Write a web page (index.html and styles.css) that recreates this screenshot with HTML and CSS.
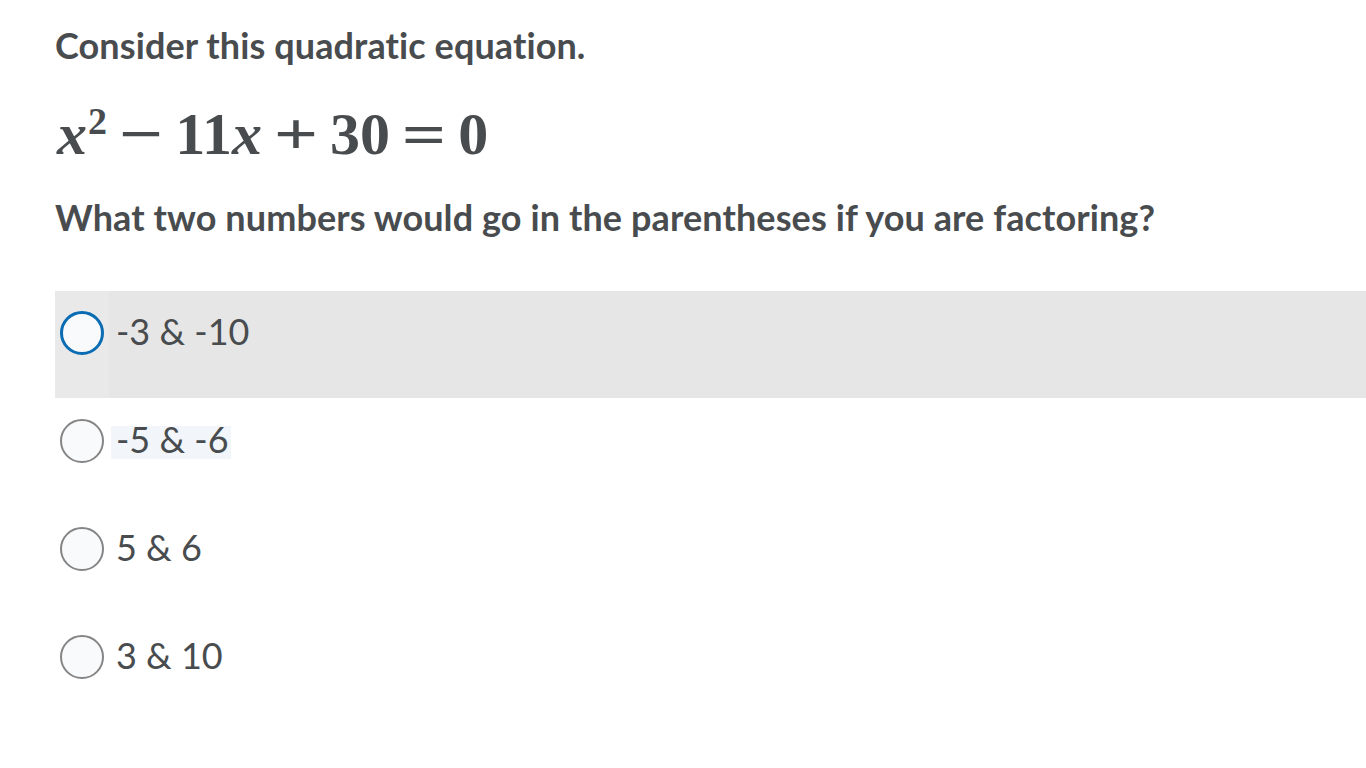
FILE: index.html
```html
<!DOCTYPE html>
<html>
<head>
<meta charset="utf-8">
<link rel="stylesheet" href="styles.css">
</head>
<body>
<main class="question">
  <p class="prompt">Consider this quadratic equation.</p>
  <div class="equation"><span class="var">x</span><span class="exp">2</span><span class="op">−</span><span class="num">11</span><span class="var">x</span><span class="op">+</span><span class="num">30</span><span class="op">=</span><span class="num">0</span></div>
  <p class="prompt ask">What two numbers would go in the parentheses if you are factoring?</p>
  <ul class="choices">
    <li class="choice hover"><span class="gutter"><span class="radio focus"></span></span><span class="label">-3 &amp; -10</span></li>
    <li class="choice"><span class="gutter"><span class="radio"></span></span><span class="label hl">-5 &amp; -6</span></li>
    <li class="choice"><span class="gutter"><span class="radio"></span></span><span class="label">5 &amp; 6</span></li>
    <li class="choice"><span class="gutter"><span class="radio"></span></span><span class="label">3 &amp; 10</span></li>
  </ul>
</main>
</body>
</html>
```
FILE: styles.css
```css
html, body {
  margin: 0;
  padding: 0;
  background: #fff;
}
body {
  font-family: Lato, "Open Sans", sans-serif;
  color: #494c4e;
  overflow: hidden;
}
.question {
  padding: 23px 0 0 55px;
}
.prompt {
  margin: 0;
  font-size: 36px;
  font-weight: 700;
  line-height: 44px;
  letter-spacing: 0.1px;
}
.equation {
  margin: 35px 0 0 2px;
  font-family: "Liberation Serif", "DejaVu Serif", serif;
  font-weight: 700;
  font-size: 60px;
  line-height: 64px;
  height: 64px;
  display: flex;
  align-items: baseline;
}
.var {
  font-style: italic;
}
.exp {
  font-size: 38px;
  position: relative;
  top: -20px;
  margin-left: 1px;
}
.op {
  font-weight: 700;
  margin: 0 13px;
  display: inline-block;
  transform: scaleX(1.3);
  transform-origin: center;
  padding: 0 4px;
}
.ask {
  margin-top: 29px;
}
.choices {
  list-style: none;
  margin: 52px 0 0 0;
  padding: 0;
}
.choice {
  display: flex;
  align-items: flex-start;
  height: 108px;
  font-size: 36px;
}
.choice.hover {
  background: #e6e6e6;
  height: 107px;
  margin-bottom: 1px;
}
.gutter {
  width: 54px;
  align-self: stretch;
  display: flex;
  align-items: flex-start;
  justify-content: center;
  padding-top: 20px;
}
.hover .gutter {
  background: #e9e9e9;
}
.radio {
  box-sizing: border-box;
  width: 44px;
  height: 44px;
  border-radius: 50%;
  border: 2px solid #858585;
  background: #f9fafc;
}
.radio.focus {
  border: 3px solid #0a6cb2;
}
.label {
  margin: 27px 0 0 6px;
  line-height: 27px;
  padding: 0 2px 6px 1px;
}
.label.hl {
  margin-left: 2px;
  padding-left: 5px;
  background: #f2f6fa;
}
```
